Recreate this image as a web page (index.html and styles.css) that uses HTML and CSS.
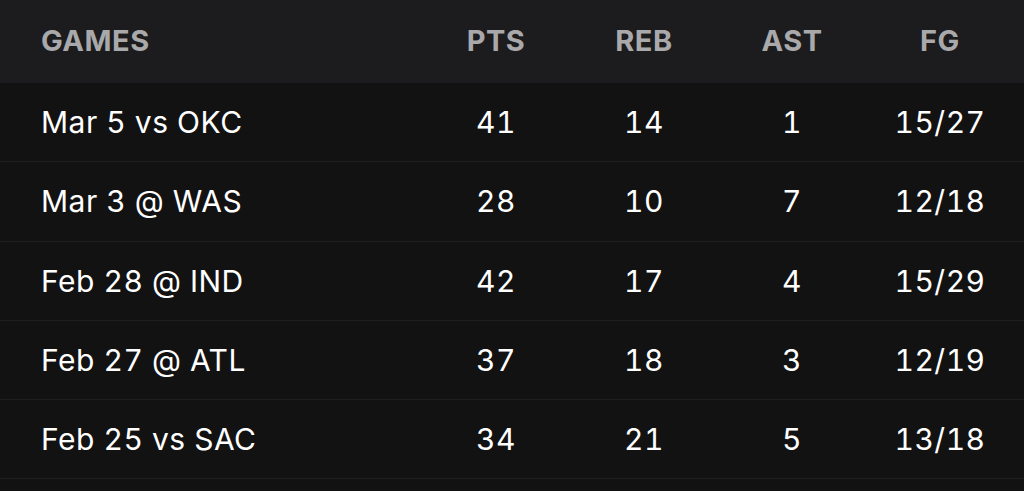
FILE: index.html
```html
<!DOCTYPE html>
<html>
<head>
<meta charset="utf-8">
<link rel="stylesheet" href="styles.css">
</head>
<body>
<div class="table">
  <div class="row head">
    <div class="game">GAMES</div>
    <div class="stat">PTS</div>
    <div class="stat">REB</div>
    <div class="stat">AST</div>
    <div class="stat">FG</div>
  </div>
  <div class="row">
    <div class="game">Mar 5 vs OKC</div>
    <div class="stat">41</div>
    <div class="stat">14</div>
    <div class="stat">1</div>
    <div class="stat">15/27</div>
  </div>
  <div class="row">
    <div class="game">Mar 3 @ WAS</div>
    <div class="stat">28</div>
    <div class="stat">10</div>
    <div class="stat">7</div>
    <div class="stat">12/18</div>
  </div>
  <div class="row">
    <div class="game">Feb 28 @ IND</div>
    <div class="stat">42</div>
    <div class="stat">17</div>
    <div class="stat">4</div>
    <div class="stat">15/29</div>
  </div>
  <div class="row">
    <div class="game">Feb 27 @ ATL</div>
    <div class="stat">37</div>
    <div class="stat">18</div>
    <div class="stat">3</div>
    <div class="stat">12/19</div>
  </div>
  <div class="row">
    <div class="game">Feb 25 vs SAC</div>
    <div class="stat">34</div>
    <div class="stat">21</div>
    <div class="stat">5</div>
    <div class="stat">13/18</div>
  </div>
</div>
</body>
</html>
```
FILE: styles.css
```css
html, body {
  margin: 0;
  padding: 0;
  background: #121212;
}
body {
  font-family: Inter, "Noto Sans", sans-serif;
  color: #ffffff;
}
.table {
  display: flex;
  flex-direction: column;
}
.row {
  display: grid;
  grid-template-columns: 1fr repeat(4, 148px);
  align-items: center;
  height: 78.3px;
  padding: 0 10px 0 41px;
  border-bottom: 1px solid #1f1f1f;
  font-size: 30px;
  font-weight: 400;
  letter-spacing: 0.5px;
  font-variant-numeric: tabular-nums;
}
.row.head {
  height: 83px;
  background: #1c1c1e;
  border-bottom: none;
  color: #a9a9ab;
  font-size: 29px;
  font-weight: 700;
  letter-spacing: 0.5px;
  padding-bottom: 2px;
  box-sizing: border-box;
}
.stat {
  text-align: center;
}
```
